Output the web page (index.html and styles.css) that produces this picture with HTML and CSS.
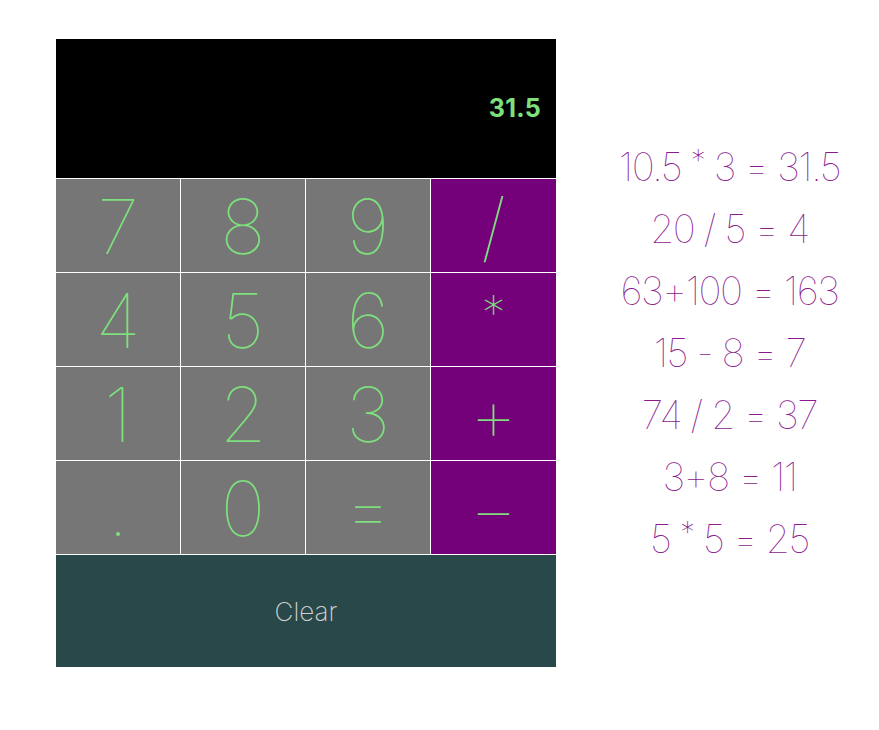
FILE: index.html
```html
<!DOCTYPE html>
<html>
<head>
<meta charset="utf-8">
<link rel="stylesheet" href="styles.css">
</head>
<body>
<div class="page">
  <div class="calc">
    <div class="display"><span class="value">31.5</span></div>
    <div class="keys">
      <div class="key num">7</div>
      <div class="key num">8</div>
      <div class="key num">9</div>
      <div class="key op">/</div>
      <div class="key num">4</div>
      <div class="key num">5</div>
      <div class="key num">6</div>
      <div class="key op star">*</div>
      <div class="key num">1</div>
      <div class="key num">2</div>
      <div class="key num">3</div>
      <div class="key op">+</div>
      <div class="key num">.</div>
      <div class="key num">0</div>
      <div class="key num">=</div>
      <div class="key op">&minus;</div>
    </div>
    <div class="clear">Clear</div>
  </div>
  <div class="history">
    <div class="line">10.5 <span class="ast">*</span> 3 = 31.5</div>
    <div class="line">20 / 5 = 4</div>
    <div class="line">63+100 = 163</div>
    <div class="line">15 - 8 = 7</div>
    <div class="line">74 / 2 = 37</div>
    <div class="line">3+8 = 11</div>
    <div class="line">5 <span class="ast">*</span> 5 = 25</div>
  </div>
</div>
</body>
</html>
```

FILE: styles.css
```css
html, body {
  margin: 0;
  padding: 0;
  background: #ffffff;
}
body {
  font-family: Inter, "Noto Sans", sans-serif;
}
.page {
  display: flex;
  padding: 39px 0 0 56px;
}
.calc {
  width: 500px;
  display: flex;
  flex-direction: column;
  background: #ffffff;
}
.display {
  height: 139px;
  background: #000000;
  display: flex;
  align-items: center;
  justify-content: flex-end;
  padding-right: 15px;
}
.value {
  color: #7ee07d;
  font-weight: 700;
  font-size: 25px;
  letter-spacing: 0.3px;
  margin-top: -1px;
}
.keys {
  display: grid;
  grid-template-columns: 124px 124px 124px 125px;
  grid-auto-rows: 93px;
  gap: 1px;
  padding: 1px 0;
  background: #ffffff;
}
.key {
  display: flex;
  align-items: center;
  justify-content: center;
  color: #7ee07d;
  font-weight: 100;
  font-size: 76px;
  line-height: 1;
}
.num {
  background: #767676;
}
.op {
  background: #74007a;
}
.star {
  align-items: flex-start;
  padding-top: 16px;
  font-size: 48px;
}
.clear {
  height: 112px;
  background: #294849;
  color: #d0d0d0;
  font-weight: 200;
  font-size: 26px;
  display: flex;
  align-items: center;
  justify-content: center;
}
.history {
  width: 300px;
  margin-left: 24px;
  padding-top: 97px;
  display: flex;
  flex-direction: column;
  align-items: center;
  color: #8a1a8e;
  font-weight: 100;
  font-size: 39px;
  letter-spacing: -1.5px;
}
.line {
  height: 62px;
  line-height: 62px;
  white-space: nowrap;
}
.ast {
  font-size: 30px;
  line-height: 0;
  vertical-align: 0.35em;
}
```
